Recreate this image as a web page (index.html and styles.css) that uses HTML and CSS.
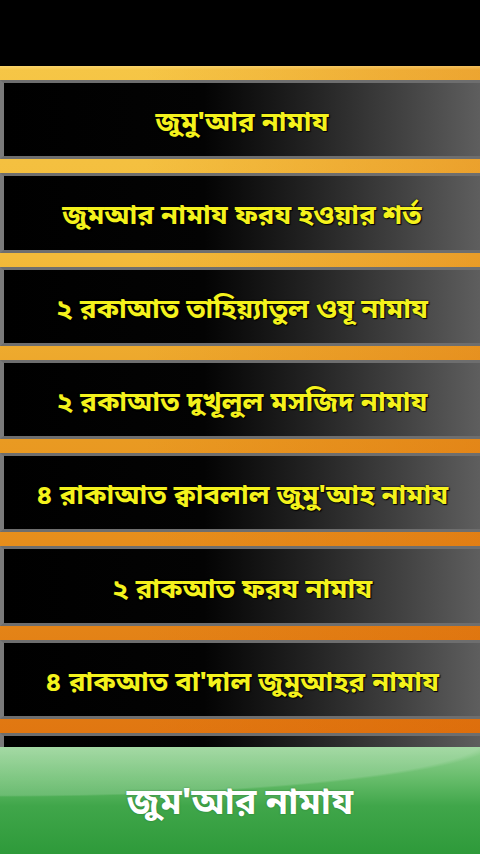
FILE: index.html
```html
<!DOCTYPE html>
<html lang="bn">
<head>
<meta charset="utf-8">
<link rel="stylesheet" href="styles.css">
</head>
<body>
<div class="screen">
  <div class="status"></div>
  <div class="list">
    <div class="item"><div class="btn">জুমু'আর নামায</div></div>
    <div class="item"><div class="btn">জুমআর নামায ফরয হওয়ার শর্ত</div></div>
    <div class="item"><div class="btn">২ রকাআত তাহিয়্যাতুল ওযূ নামায</div></div>
    <div class="item"><div class="btn">২ রকাআত দুখূলুল মসজিদ নামায</div></div>
    <div class="item"><div class="btn">৪ রাকাআত ক্বাবলাল জুমু'আহ নামায</div></div>
    <div class="item"><div class="btn">২ রাকআত ফরয নামায</div></div>
    <div class="item"><div class="btn">৪ রাকআত বা'দাল জুমুআহর নামায</div></div>
    <div class="item cut"><div class="btn"></div></div>
  </div>
  <div class="footer">জুম'আর নামায</div>
</div>
</body>
</html>
```

FILE: styles.css
```css
html, body {
  margin: 0;
  padding: 0;
  background: #000;
}
.screen {
  width: 480px;
  height: 854px;
  display: flex;
  flex-direction: column;
  overflow: hidden;
  font-family: "Noto Sans Bengali", "Noto Sans", "DejaVu Sans", sans-serif;
}
.status {
  height: 66px;
  flex: none;
  background: #000;
}
.list {
  height: 681px;
  flex: none;
  overflow: hidden;
  background:
    linear-gradient(to bottom, rgba(255,240,180,0.35) 0, rgba(255,240,180,0) 4px),
    linear-gradient(to right, rgba(0,0,0,0) 30%, rgba(215,90,0,0.3) 100%),
    linear-gradient(to bottom, #f6c646 0, #f2ba3a 28%, #e99a22 55%, #e07510 100%);
}
.item {
  padding-top: 14px;
}
.btn {
  box-sizing: border-box;
  height: 79.3px;
  border-top: 3px solid #6e6e6e;
  border-bottom: 3px solid #6e6e6e;
  border-left: 4px solid #7a7a7a;
  background: linear-gradient(to right, #000 0, #030303 42%, #222 64%, #444 85%, #5e5e5e 100%);
  display: flex;
  align-items: center;
  justify-content: center;
  color: #f4f21c;
  font-weight: bold;
  font-size: 27.5px;
  white-space: nowrap;
  text-shadow: 1px 1px 1px #000, 0 0 2px #000;
  padding-top: 9px;
}
.cut .btn {
  height: 30px;
}
.footer {
  flex: 1;
  display: flex;
  align-items: center;
  justify-content: center;
  color: #fff;
  font-weight: bold;
  font-size: 36px;
  padding-top: 9px;
  text-shadow: 0 0 2px rgba(0,60,0,0.4);
  background:
    radial-gradient(ellipse 500px 58px at 0 -8px, rgba(255,255,255,0.16) 0, rgba(255,255,255,0.16) 97%, rgba(255,255,255,0) 100%),
    linear-gradient(to bottom, #93d293 0, #66bc6a 30%, #40a64a 55%, #2e9a3a 100%);
}
```
